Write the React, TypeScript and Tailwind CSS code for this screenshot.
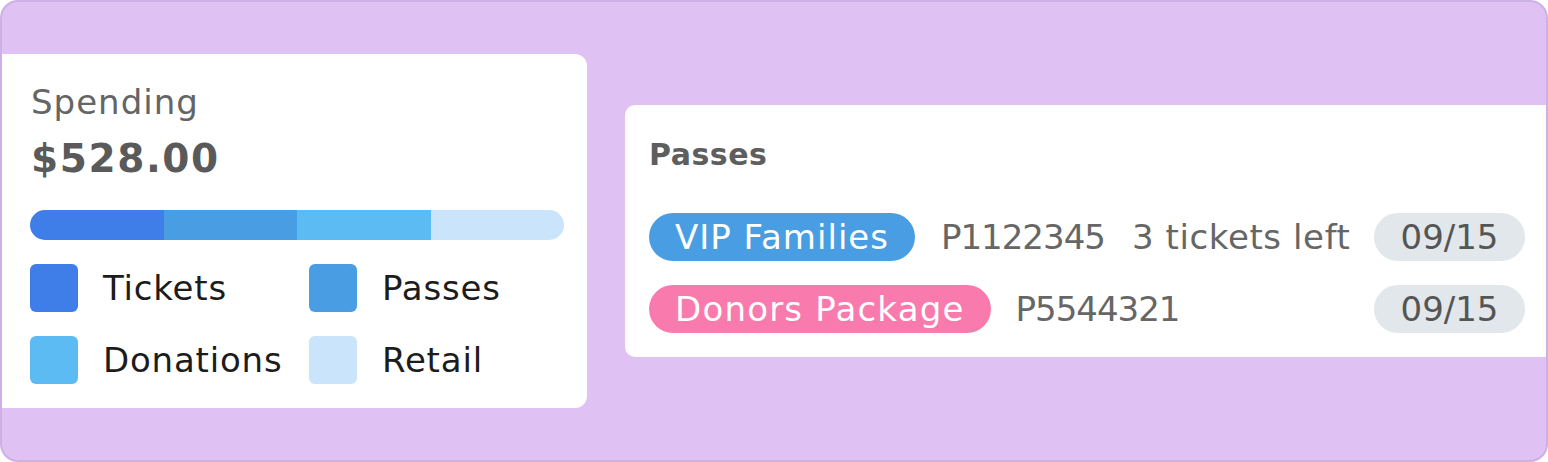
import React from "react";

export default function App() {
  const font = { fontFamily: "'DejaVu Sans', 'Open Sans', sans-serif" };
  return (
    <div style={font} className="w-[1548px] h-[462px] bg-[#dfc1f3] border-2 border-[#cdb1e6] rounded-[18px] flex items-center overflow-hidden">
      <div className="w-[585px] h-[354px] bg-white rounded-r-[12px] pl-[28px] pr-[24px] pt-[26px] flex flex-col shrink-0">
        <div className="text-[34px] leading-[44px] text-[#656565] tracking-[1px] pl-[1px]">Spending</div>
        <div className="text-[39px] leading-[50px] mt-[10px] text-[#5a5a5a] font-bold tracking-[1.6px] pl-[1px]">$528.00</div>
        <div className="mt-[26px] w-[534px] h-[30px] rounded-full overflow-hidden flex">
          <div className="flex-1 bg-[#3f7de8]" />
          <div className="flex-1 bg-[#499ee3]" />
          <div className="flex-1 bg-[#5dbbf4]" />
          <div className="flex-1 bg-[#c9e4fb]" />
        </div>
        <div className="mt-[24px] grid grid-cols-[279px_1fr] gap-y-[24px]">
          {[
            ["Tickets", "bg-[#3f7de8]"],
            ["Passes", "bg-[#499ee3]"],
            ["Donations", "bg-[#5dbbf4]"],
            ["Retail", "bg-[#c9e4fb]"],
          ].map(([label, c]) => (
            <div key={label} className="flex items-center gap-[25px] h-[48px]">
              <div className={`w-[48px] h-[48px] rounded-[6px] ${c}`} />
              <span className="text-[34px] text-[#1c1c1c] tracking-[0.8px]">{label}</span>
            </div>
          ))}
        </div>
      </div>
      <div className="ml-[38px] flex-1 h-[252px] bg-white rounded-l-[10px] pl-[24px] pr-[21px] pt-[30px] flex flex-col">
        <div className="text-[30px] leading-[40px] font-bold text-[#5e5e5e] tracking-[0.5px]">Passes</div>
        <div className="mt-[38px] flex items-center h-[48px]">
          <span className="h-[48px] px-[26px] rounded-full bg-[#499ee3] text-white text-[34px] tracking-[1px] flex items-center">VIP Families</span>
          <span className="ml-[26px] text-[34px] text-[#666] tracking-[-1px]">P1122345</span>
          <span className="ml-[27px] text-[34px] text-[#666] tracking-[0.6px]">3 tickets left</span>
          <span className="ml-auto h-[48px] w-[151px] rounded-full bg-[#e1e7ea] text-[34px] text-[#555] flex items-center justify-center">09/15</span>
        </div>
        <div className="mt-[24px] flex items-center h-[48px]">
          <span className="h-[48px] px-[26px] rounded-full bg-[#f97aad] text-white text-[34px] tracking-[1.2px] flex items-center">Donors Package</span>
          <span className="ml-[25px] text-[34px] text-[#666] tracking-[-1px]">P5544321</span>
          <span className="ml-auto h-[48px] w-[151px] rounded-full bg-[#e1e7ea] text-[34px] text-[#555] flex items-center justify-center">09/15</span>
        </div>
      </div>
    </div>
  );
}
